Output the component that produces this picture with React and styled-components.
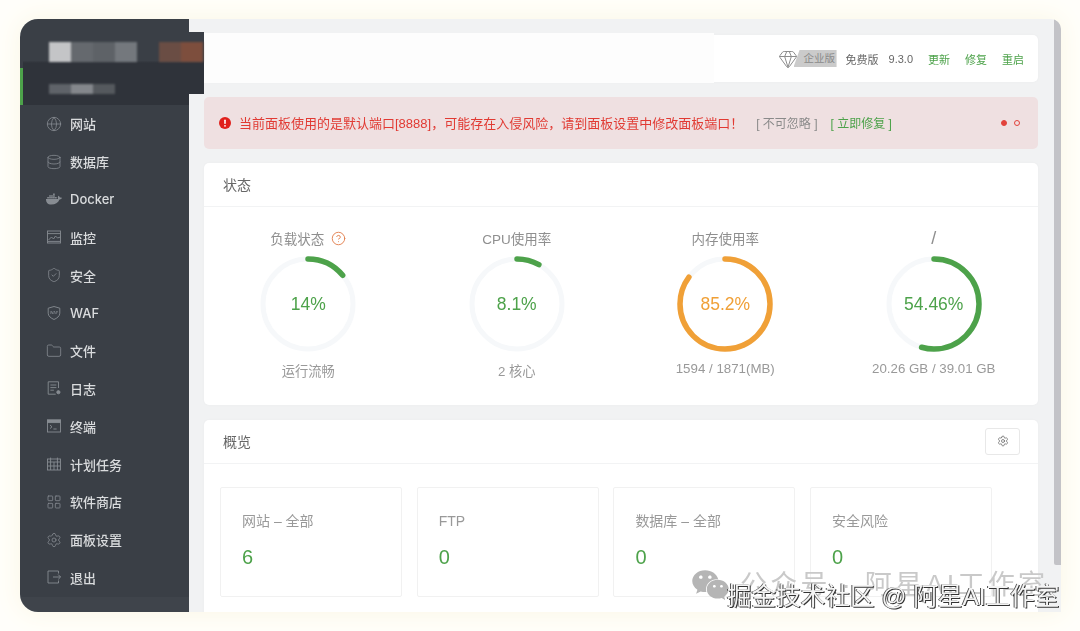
import React from "react";
import styled, { createGlobalStyle } from "styled-components";
import {
  Globe,
  Database,
  ShieldCheck,
  Folder,
  LayoutGrid,
  Settings,
  Gem,
  CircleHelp,
} from "lucide-react";
import { FaDocker, FaWeixin } from "react-icons/fa";

const GlobalStyle = createGlobalStyle`
  html, body {
    margin: 0;
    height: 100%;
    background: #fffefa;
  }
  * {
    box-sizing: border-box;
  }
  body {
    font-family: "Liberation Sans", "Noto Sans CJK SC", sans-serif;
    overflow: hidden;
  }
`;

const GREEN = "#4da24a";
const ORANGE = "#f0a037";

const Page = styled.div`
  position: relative;
  width: 1080px;
  height: 631px;
  padding: 19px 19px 19px 20px;
  filter: blur(0.3px);
`;

const Window = styled.div`
  position: relative;
  display: flex;
  height: 593px;
  overflow: hidden;
  border-radius: 18px 10px 0 18px;
  background: #f1f2f3;
  box-shadow: 0 0 26px #faf7e4;
`;

const Sidebar = styled.aside`
  width: 169px;
  flex-shrink: 0;
  background: linear-gradient(#3a3f46 0, #3a3f46 578px, #3f444b 578px);
  color: #d9dbdd;
`;

const ActiveRow = styled.div`
  height: 37px;
  margin: 49px 0 0;
  background: #2f333a;
  border-left: 3px solid ${GREEN};
`;

const Nav = styled.nav`
  display: flex;
  flex-direction: column;
`;

const NavItem = styled.div`
  display: flex;
  align-items: center;
  gap: 8px;
  height: 37.8px;
  padding-left: 26px;
  font-family: Inter, "Noto Sans CJK SC", sans-serif;
  font-size: 13px;
  font-weight: 500;
  color: #d9dbdd;

  svg {
    flex-shrink: 0;
    width: 16px;
    height: 16px;
    color: #878c92;
  }
`;

/* pixelated brand block that sits over the sidebar edge */
const BrandMask = styled.div`
  position: absolute;
  top: 13px;
  left: 3px;
  width: 181px;
  height: 62px;
  padding: 10px 0 0 26px;
  background: linear-gradient(#3a3f46 0, #3a3f46 46%, #2f333a 50%, #2f333a 100%);
`;

const MosaicRow = styled.div`
  display: flex;
  height: ${(p) => p.$height}px;
  margin-top: ${(p) => p.$top || 0}px;
  filter: blur(0.8px);
`;

const Mosaic = styled.span`
  width: ${(p) => p.$width}px;
  background: ${(p) => p.$color};
`;

const Main = styled.main`
  flex: 1;
  display: flex;
  flex-direction: column;
  gap: 14.5px;
  padding: 16px 23px 0 15px;
  min-width: 0;
`;

const Card = styled.section`
  flex-shrink: 0;
  background: #fff;
  border-radius: 5px;
  box-shadow: 0 0 3px rgba(0, 0, 0, 0.03);
`;

const TopBar = styled(Card)`
  position: relative;
  display: flex;
  align-items: center;
  justify-content: flex-end;
  gap: 15px;
  height: 47px;
  padding-right: 14px;
  font-size: 11px;
  color: #666;
`;

const TopSmear = styled.div`
  position: absolute;
  top: -2px;
  left: 0;
  width: 510px;
  height: 50px;
  background: #fdfdfd;
`;

const Edition = styled.div`
  display: flex;
  align-items: center;
  margin-right: -6px;

  svg {
    width: 20px;
    height: 20px;
    color: #8d8d8d;
    stroke-width: 1.2;
    margin-right: -4px;
    position: relative;
    z-index: 1;
  }
`;

const EditionTag = styled.span`
  width: 43px;
  height: 17px;
  line-height: 17px;
  padding-left: 10px;
  font-size: 10.5px;
  color: #8a8a8a;
  background: #cbcbcb;
  clip-path: polygon(6px 0, 100% 0, 100% 100%, 0 100%);
`;

const PlainText = styled.span`
  margin-right: ${(p) => p.$pull || 0}px;
`;

const TopLink = styled.span`
  color: ${GREEN};
`;

const Alert = styled.div`
  flex-shrink: 0;
  display: flex;
  align-items: center;
  height: 52px;
  padding: 0 18px 0 15px;
  border-radius: 5px;
  background: #efe0e1;
  font-size: 13px;
  color: #e13a33;
`;

const AlertIcon = styled.svg`
  width: 12px;
  height: 12px;
  margin-right: 8px;
  flex-shrink: 0;
`;

const AlertAction = styled.span`
  margin-left: ${(p) => p.$left}px;
  font-size: 12px;
  color: ${(p) => (p.$fix ? GREEN : "#8a8a8a")};
`;

const Dots = styled.div`
  margin-left: auto;
  display: flex;
  align-items: center;
  gap: 7px;
`;

const Dot = styled.span`
  width: 6px;
  height: 6px;
  border-radius: 50%;
  border: 1px solid #e2433c;
  background: ${(p) => (p.$on ? "#e2433c" : "transparent")};
`;

const CardHeader = styled.header`
  display: flex;
  align-items: center;
  justify-content: space-between;
  height: 44px;
  padding: 0 18px ${(p) => p.$lift || 0}px 19px;
  border-bottom: 1px solid #f2f3f4;
  font-size: 14px;
  color: #666;
`;

const GaugeGrid = styled.div`
  display: grid;
  grid-template-columns: repeat(4, 1fr);
  height: 198px;
  padding-top: 21px;
`;

const GaugeCell = styled.div`
  display: flex;
  flex-direction: column;
  align-items: center;
`;

const GaugeTitle = styled.div`
  display: flex;
  align-items: center;
  gap: 7px;
  height: 20px;
  font-size: ${(p) => (p.$large ? "18px" : "13.5px")};
  color: #8f8f8f;

  svg {
    width: 15px;
    height: 15px;
    color: #e2804f;
  }
`;

const Dial = styled.div`
  position: relative;
  width: 96px;
  height: 96px;
  margin-top: 8px;
`;

const DialValue = styled.div`
  position: absolute;
  inset: 0;
  display: flex;
  align-items: center;
  justify-content: center;
  font-size: 17.5px;
  color: ${(p) => p.$color};
`;

const GaugeNote = styled.div`
  margin-top: 9px;
  font-size: 13.3px;
  color: #999;
`;

const GearButton = styled.button`
  display: flex;
  align-items: center;
  justify-content: center;
  width: 35px;
  height: 27px;
  padding: 0;
  background: #fff;
  border: 1px solid #e8e8e8;
  border-radius: 3px;

  svg {
    width: 12px;
    height: 12px;
    color: #666;
  }
`;

const StatRow = styled.div`
  display: flex;
  gap: 14.7px;
  padding: 23px 0 40px 16px;
`;

const StatCard = styled.div`
  width: 182px;
  height: 110px;
  padding: 23px 0 0 21px;
  border: 1px solid #f1f1f1;
  border-radius: 2px;
`;

const StatLabel = styled.div`
  font-size: 14px;
  line-height: 20px;
  color: #999;
`;

const StatValue = styled.div`
  margin-top: 14px;
  font-size: 20px;
  line-height: 24px;
  color: ${GREEN};
`;

const Scrollbar = styled.div`
  position: absolute;
  top: 0;
  right: 0;
  width: 7px;
  height: 546px;
  background: #c3c3c7;
  border-radius: 0 10px 0 3px;
`;

const WatermarkBack = styled.div`
  position: absolute;
  top: 568px;
  left: 690px;
  display: flex;
  align-items: center;
  gap: 9px;
  font-size: 27px;
  line-height: 34px;
  letter-spacing: 3.3px;
  white-space: nowrap;
  color: #c9c9c9;

  svg {
    width: 41px;
    height: 34px;
    color: #b5b5b5;
  }
`;

const WatermarkFront = styled.div`
  position: absolute;
  top: 582px;
  left: 727px;
  font-size: 24.6px;
  line-height: 30px;
  white-space: nowrap;
  color: #f4f4f4;
  text-shadow: 1px 1px 0 #333, -1px 0 0 #555;
`;

const LineIcon = ({ children }) => (
  <svg viewBox="-1 -1 16 16" fill="none" stroke="currentColor" strokeWidth="0.9">
    {children}
  </svg>
);

const navItems = [
  { icon: <Globe strokeWidth={1.2} />, label: "网站" },
  { icon: <Database strokeWidth={1.2} />, label: "数据库" },
  { icon: <FaDocker />, label: "Docker" },
  {
    icon: (
      <LineIcon>
        <rect x="0.5" y="1" width="13" height="12" />
        <path d="M0.5 3.6h13M1.5 10l3-3 2 2 2-3 2 2 3-1M1 11.4h12" />
      </LineIcon>
    ),
    label: "监控",
  },
  { icon: <ShieldCheck strokeWidth={1.2} />, label: "安全" },
  {
    icon: (
      <LineIcon>
        <path d="M7 0.5l5.8 1.7v5c0 3-2.8 5-5.8 6.3-3-1.3-5.8-3.3-5.8-6.3v-5z" />
        <text x="7" y="7.6" fontSize="3.8" textAnchor="middle" fill="currentColor" stroke="none">
          WAF
        </text>
      </LineIcon>
    ),
    label: "WAF",
  },
  { icon: <Folder strokeWidth={1.2} />, label: "文件" },
  {
    icon: (
      <LineIcon>
        <path d="M11.5 7V0.8H1.2v12.4h7.5M3.4 4h6M3.4 6.6h6M3.4 9.2h3.5" />
        <circle cx="11.4" cy="11.2" r="1.6" fill="currentColor" />
      </LineIcon>
    ),
    label: "日志",
  },
  {
    icon: (
      <LineIcon>
        <rect x="0.5" y="1" width="13" height="12" />
        <rect x="0.5" y="1" width="13" height="2.6" fill="currentColor" />
        <path d="M3 6l2 1.8-2 1.8M6.4 10h3.2" />
      </LineIcon>
    ),
    label: "终端",
  },
  {
    icon: (
      <LineIcon>
        <rect x="0.5" y="2" width="13" height="11" />
        <path d="M0.5 5h13M0.5 9h13M3.6 0.6V5M10.4 0.6V5M3.6 5v8M7 5v8M10.4 5v8" />
      </LineIcon>
    ),
    label: "计划任务",
  },
  { icon: <LayoutGrid strokeWidth={1.2} />, label: "软件商店" },
  { icon: <Settings strokeWidth={1.2} />, label: "面板设置" },
  {
    icon: (
      <LineIcon>
        <path d="M11.5 3.5V1H1v12h10.5v-2.5M6 7h7.5M11.2 4.6L13.6 7l-2.4 2.4" />
      </LineIcon>
    ),
    label: "退出",
  },
];

const gauges = [
  { title: "负载状态", help: true, pct: 14, text: "14%", color: GREEN, note: "运行流畅" },
  { title: "CPU使用率", pct: 8.1, text: "8.1%", color: GREEN, note: "2 核心" },
  { title: "内存使用率", pct: 85.2, text: "85.2%", color: ORANGE, note: "1594 / 1871(MB)" },
  { title: "/", pct: 54.46, text: "54.46%", color: GREEN, note: "20.26 GB / 39.01 GB" },
];

const stats = [
  { label: "网站 – 全部", value: 6 },
  { label: "FTP", value: 0 },
  { label: "数据库 – 全部", value: 0 },
  { label: "安全风险", value: 0 },
];

const Gauge = ({ pct, text, color }) => (
  <Dial>
    <svg width="96" height="96" viewBox="0 0 96 96">
      <circle cx="48" cy="48" r="45" fill="none" stroke="#f6f8fa" strokeWidth="5" />
      <circle
        cx="48"
        cy="48"
        r="45"
        fill="none"
        stroke={color}
        strokeWidth="5.5"
        strokeLinecap="round"
        pathLength="100"
        strokeDasharray={`${pct} 100`}
        transform="rotate(-90 48 48)"
      />
    </svg>
    <DialValue $color={color}>{text}</DialValue>
  </Dial>
);

export default function App() {
  return (
    <Page>
      <GlobalStyle />
      <Window>
        <Sidebar>
          <ActiveRow />
          <Nav>
            {navItems.map((item) => (
              <NavItem key={item.label}>
                {item.icon}
                <span>{item.label}</span>
              </NavItem>
            ))}
          </Nav>
        </Sidebar>
        <Main>
          <TopBar>
            <TopSmear />
            <Edition>
              <Gem />
              <EditionTag>企业版</EditionTag>
            </Edition>
            <PlainText $pull={-5}>免费版</PlainText>
            <PlainText>9.3.0</PlainText>
            <TopLink>更新</TopLink>
            <TopLink>修复</TopLink>
            <TopLink>重启</TopLink>
          </TopBar>
          <Alert>
            <AlertIcon viewBox="0 0 12 12">
              <circle cx="6" cy="6" r="6" fill="#e0201c" />
              <rect x="5.2" y="2.4" width="1.6" height="4.6" rx="0.8" fill="#fff" />
              <circle cx="6" cy="8.8" r="0.9" fill="#fff" />
            </AlertIcon>
            <span>当前面板使用的是默认端口[8888]，可能存在入侵风险，请到面板设置中修改面板端口！</span>
            <AlertAction $left={13}>[ 不可忽略 ]</AlertAction>
            <AlertAction $left={13} $fix>
              [ 立即修复 ]
            </AlertAction>
            <Dots>
              <Dot $on />
              <Dot />
            </Dots>
          </Alert>
          <Card>
            <CardHeader $lift={2}>状态</CardHeader>
            <GaugeGrid>
              {gauges.map((g) => (
                <GaugeCell key={g.title}>
                  <GaugeTitle $large={g.title === "/"}>
                    {g.title}
                    {g.help && <CircleHelp strokeWidth={1.5} />}
                  </GaugeTitle>
                  <Gauge pct={g.pct} text={g.text} color={g.color} />
                  <GaugeNote>{g.note}</GaugeNote>
                </GaugeCell>
              ))}
            </GaugeGrid>
          </Card>
          <Card>
            <CardHeader>
              概览
              <GearButton>
                <Settings strokeWidth={1.5} />
              </GearButton>
            </CardHeader>
            <StatRow>
              {stats.map((s) => (
                <StatCard key={s.label}>
                  <StatLabel>{s.label}</StatLabel>
                  <StatValue>{s.value}</StatValue>
                </StatCard>
              ))}
            </StatRow>
          </Card>
        </Main>
        <Scrollbar />
        <BrandMask>
          <MosaicRow $height={20}>
            <Mosaic $width={22} $color="#c4c5c7" />
            <Mosaic $width={22} $color="#65696e" />
            <Mosaic $width={22} $color="#5e6267" />
            <Mosaic $width={22} $color="#74787d" />
            <Mosaic $width={22} $color="transparent" />
            <Mosaic $width={22} $color="#6a4d44" />
            <Mosaic $width={22} $color="#7d4e3d" />
          </MosaicRow>
          <MosaicRow $height={10} $top={22}>
            <Mosaic $width={22} $color="#5f6369" />
            <Mosaic $width={22} $color="#84878c" />
            <Mosaic $width={22} $color="#55595e" />
          </MosaicRow>
        </BrandMask>
      </Window>
      <WatermarkBack>
        <FaWeixin />
        公众号 · 阿星AI工作室
      </WatermarkBack>
      <WatermarkFront>掘金技术社区 @ 阿星AI工作室</WatermarkFront>
    </Page>
  );
}
